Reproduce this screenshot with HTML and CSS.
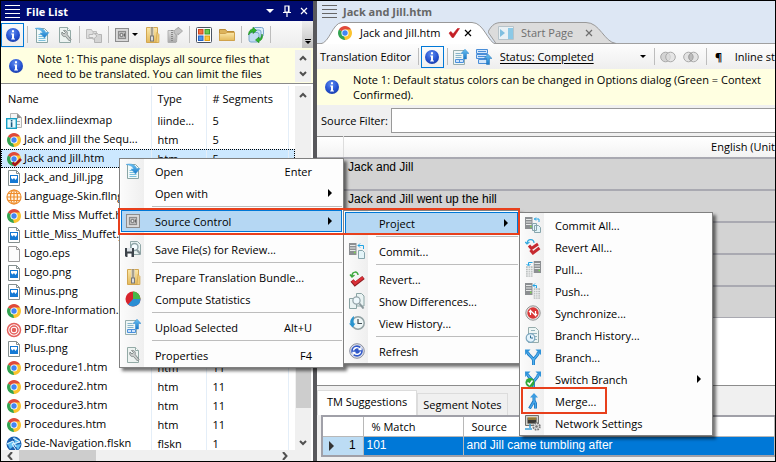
FILE: index.html
```html
<!DOCTYPE html>
<html lang="en">
<head>
<meta charset="utf-8">
<title>Translation Editor</title>
<link rel="stylesheet" href="styles.css">
</head>
<body>
<svg class="sprite" aria-hidden="true">
  <defs>
    <radialGradient id="gBlue" cx=".45" cy=".3" r=".8"><stop offset="0" stop-color="#5f8cf0"/><stop offset=".6" stop-color="#2450cf"/><stop offset="1" stop-color="#1b3aa0"/></radialGradient>
    <linearGradient id="gFold" x1="0" y1="0" x2="0" y2="1"><stop offset="0" stop-color="#fbe7a8"/><stop offset="1" stop-color="#e3b95c"/></linearGradient>
    <linearGradient id="gGray" x1="0" y1="0" x2="0" y2="1"><stop offset="0" stop-color="#e0e0e0"/><stop offset="1" stop-color="#a8a8a8"/></linearGradient>
    <linearGradient id="gArrow" x1="0" y1="0" x2="0" y2="1"><stop offset="0" stop-color="#6cc2f2"/><stop offset="1" stop-color="#1878c8"/></linearGradient>
  </defs>
  <symbol id="info" viewBox="0 0 16 16"><circle cx="8" cy="8" r="7" fill="url(#gBlue)"/><path d="M7 3.200h2v2H7zM6.200 6.400H9v5h1V12.600H6.200V11.400H7V7.600H6.200z" fill="#fff"/></symbol>
  <symbol id="open" viewBox="0 0 16 16"><path d="M2.500 1.500h8l3 3v11h-11z" fill="#f2fafa" stroke="#8aa6a6"/><path d="M4.500 7.500h4M4.500 9.500h5M4.500 11.500h7M4.500 13.500h7" stroke="#7cc0dc"/><path d="M1 1.500C6 0 11 2 11.500 5.500H15L10.500 11 6 6h2.500C8 3.500 5 2 1 1.500z" fill="url(#gArrow)" stroke="#4aa0dc" stroke-width=".5"/></symbol>
  <symbol id="wrench" viewBox="0 0 16 16"><path d="M2.500.5h8l3 3v12h-11z" fill="#edf3f1" stroke="#93aaa6"/><path d="M10.500.5v3h3" fill="#fff" stroke="#93aaa6"/><path d="M5 5l2 2 1.500-1.500-2-2C9 3 11 4.500 10.200 7.500L14 12.500l-1.500 1.500L8.500 9.500C6 10 4 8 5 5z" fill="#c9cccb" stroke="#747c7c" stroke-width=".8"/></symbol>
  <symbol id="movefiles" viewBox="0 0 16 16"><path d="M.5 2.500h5l1 2h4v7H.5z" fill="#dedede" stroke="#bdbdbd"/><path d="M8.500 6.500h3l1 1h3v8h-7z" fill="#d4d4d4" stroke="#b4b4b4"/><path d="M3 7.500h4V5.500l4 3.500-4 3.500v-2H3z" fill="#ececec" stroke="#b8b8b8"/></symbol>
  <symbol id="safe" viewBox="0 0 16 16"><rect x="1.500" y="1.500" width="13" height="13" fill="#cfcfcf" stroke="#8d8d8d"/><rect x="3" y="3" width="10" height="10" fill="#c0c0c0" stroke="#e4e4e4"/><rect x="4.500" y="4.500" width="7" height="7" fill="#bcbcbc" stroke="#8c8c8c"/><circle cx="7.500" cy="8" r="1.600" fill="#e4e4e4" stroke="#6a6a6a"/><path d="M10.500 6.500v3" stroke="#666"/></symbol>
  <symbol id="zip" viewBox="0 0 16 16"><path d="M2.500.5h11v15h-11z" fill="url(#gFold)" stroke="#d2a650"/><path d="M13 5.500l2 2v8h-3z" fill="#f0cd7a" stroke="#c89a45" stroke-width=".6"/><path d="M6 .5h4v9H6z" fill="#efe2c0"/><path d="M8 .5v9" stroke="#5e5e5e" stroke-width="2.500" stroke-dasharray="1 1"/><rect x="6.500" y="9" width="3" height="5" fill="#ddd" stroke="#777"/></symbol>
  <symbol id="zipgray" viewBox="0 0 16 16"><path d="M1 3.500h8v12H1z" fill="url(#gGray)" stroke="#b0b0b0"/><path d="M5 3v12" stroke="#888" stroke-width="2" stroke-dasharray="1 1"/><path d="M9.500 15C10 10 10 7 7 6c0-4 3-4.500 4-4.500V0l4.500 4L11 8V6" fill="#c4c4c4" stroke="#a8a8a8"/></symbol>
  <symbol id="tiles" viewBox="0 0 16 16"><rect x=".5" y=".5" width="15" height="15" rx="1" fill="#fff" stroke="#4a5262"/><rect x="2.500" y="2.500" width="4.500" height="4.500" fill="#f4703c" stroke="#cc4420"/><rect x="9" y="2.500" width="4.500" height="4.500" fill="#6fc94c" stroke="#3b9c2c"/><rect x="2.500" y="9" width="4.500" height="4.500" fill="#4a92ee" stroke="#2464c4"/><rect x="9" y="9" width="4.500" height="4.500" fill="#fcc83c" stroke="#e09c10"/></symbol>
  <symbol id="folder" viewBox="0 0 16 16"><path d="M.5 13.500V2.500h6l1.500 2h7v9z" fill="#dcb35c" stroke="#b98c3a"/><path d="M.5 13.500v-7h6l1.500-1h7.500v8z" fill="url(#gFold)" stroke="#cfa24c"/></symbol>
  <symbol id="syncall" viewBox="0 0 16 16"><rect x="5" y=".5" width="10.500" height="9" rx="2" fill="#dcedfa" stroke="#7ba8cc"/><rect x="3" y="3" width="10" height="9" rx="2" fill="#cbe2f5" stroke="#7ba8cc"/><rect x="1" y="5.500" width="10" height="9.500" rx="2" fill="#c2dcf2" stroke="#7ba8cc"/><path d="M.5 8C.5 4 3 2 5 2V.2L8.500 3.500 5 6.500V4.500C3.500 4.500 2.500 6 .5 8z" fill="#2fb52f" stroke="#168316" stroke-width=".6"/><path d="M14 7c1.500 4-1 7-3 7v1.800L7.500 13l3.500-3v2c1.500 0 2.500-2 3-5z" fill="#2fb52f" stroke="#168316" stroke-width=".6"/></symbol>
  <symbol id="chrome" viewBox="0 0 16 16"><path d="M8 8L1.940 4.500A7 7 0 0 1 14.060 4.500z" fill="#e04a3a"/><path d="M8 8L14.060 4.500A7 7 0 0 1 8 15z" fill="#fbc32e"/><path d="M8 8V15A7 7 0 0 1 1.940 4.500z" fill="#32a350"/><path d="M8 4.500h6.060L11 10z" fill="#fbc32e"/><path d="M5 6L1.940 4.500 8 4.500z" fill="#e04a3a"/><path d="M11 9.800L8 15 7 11z" fill="#fbc32e"/><circle cx="8" cy="8" r="3.600" fill="#fff"/><circle cx="8" cy="8" r="2.700" fill="#4285f4"/></symbol>
  <symbol id="chromecheck" viewBox="0 0 16 16"><use href="#chrome"/><path d="M6.500 11.500L9 14 15 8" fill="none" stroke="#a5141c" stroke-width="2.600"/></symbol>
  <symbol id="indexmap" viewBox="0 0 16 16"><path d="M4.500.5h7l4 4v10h-11z" fill="#f5f5f5" stroke="#b5b5b5"/><path d="M11 .5v4.500h4.500z" fill="#8b8b8b"/><path d="M7 5.500h5M11 8.500h3M11 11.500h3" stroke="#aaa"/><rect x=".7" y="5.700" width="9.600" height="9.600" fill="#e8fbff" stroke="#159fc4" stroke-width="1.400"/><path d="M4.800 7h1.600v1.500H4.800zM4.800 9.300h1.600V14H4.800z" fill="#1a5a80"/></symbol>
  <symbol id="image" viewBox="0 0 16 16"><path d="M2.500.5h8l3 3v12h-11z" fill="#fff" stroke="#858f8f"/><path d="M10.500.5v3h3" fill="none" stroke="#858f8f"/><rect x="4" y="5" width="8" height="8" fill="#1479d4"/><path d="M5 6h6v2L9.500 10 8 8 6.500 9.500 5 8z" fill="#fff"/></symbol>
  <symbol id="blank" viewBox="0 0 16 16"><path d="M2.500.5h8l3 3v12h-11z" fill="#fcfcfc" stroke="#9a9a9a"/><path d="M10.500.5v3h3" fill="none" stroke="#9a9a9a"/></symbol>
  <symbol id="skin" viewBox="0 0 16 16"><g fill="#fff6e8" stroke="#ee8d2c" stroke-width="1.200"><circle cx="8" cy="8" r="7"/><ellipse cx="8" cy="8" rx="3.500" ry="7"/><path d="M8 1v14M1 8h14M2 4.500h12M2 11.500h12"/></g></symbol>
  <symbol id="target" viewBox="0 0 16 16"><g fill="#fff" stroke="#e4605c" stroke-width="1.500"><circle cx="8" cy="8" r="6.500"/><circle cx="8" cy="8" r="4"/><circle cx="8" cy="8" r="1.500" fill="#e4605c"/></g></symbol>
  <symbol id="nav" viewBox="0 0 16 16"><circle cx="8" cy="8" r="7.500" fill="#1b5fae"/><path d="M1 7L7 5l2 4-5 4zM8 1l6 4-5 4zM9 9l6-1-3 6z" fill="#63bff2"/><path d="M7 2L14 6 6 8l4 6M1 8l6-3 3 6" stroke="#e8f6ff" fill="none"/></symbol>
  <symbol id="savereview" viewBox="0 0 16 16"><path d="M5.500.5h7l3 3v10h-10z" fill="#e8f2f1" stroke="#91a8a8"/><circle cx="9.500" cy="6" r="3.500" fill="#f6fdff" stroke="#90a5a8" stroke-width="1.400"/><path d="M12 9l3.500 4" stroke="#8d9ca0" stroke-width="2"/><path d="M0 7h9v9H1L0 15z" fill="#3d434a"/><path d="M2 7h5v3.500H2z" fill="#dfe4e8"/><path d="M2.500 12.500h4V16h-4z" fill="#fff"/></symbol>
  <symbol id="pie" viewBox="0 0 16 16"><circle cx="8" cy="8" r="7.500" fill="#d8242c"/><path d="M8 8V.5A7.500 7.500 0 0 1 15.500 8z" fill="#46b848"/><path d="M8 8h7.500A7.500 7.500 0 0 1 3 13.600z" fill="#2b8ed4"/></symbol>
  <symbol id="upload" viewBox="0 0 16 16"><path d="M.5 1.500h11v14H.5z" fill="#eef6f6" stroke="#96aeae"/><path d="M2.500 4.500h5M2.500 6.500h6M2.500 8.500h6" stroke="#87b4c8"/><path d="M2.500 10.500h8v3h-8zM6.500 10.500v3" fill="#cfe4fb" stroke="#4a90dc"/><path d="M12 .2L16 4.500H13.500V10h-3V4.500H8z" fill="url(#gArrow)" stroke="#2d86cc" stroke-width=".5"/></symbol>
  <symbol id="uploadgrid" viewBox="0 0 16 16"><path d="M.5.5h11v4H.5zM.5 5.500h11v4H.5zM2.500 10.500h9v4h-9z" fill="#d3e7fb" stroke="#4a8ed8"/><path d="M2 2.500h8M2 7.500h8" stroke="#4a8ed8"/><path d="M12 5.200L16 9.500H13.500V15.500h-3V9.500H8z" fill="url(#gArrow)" stroke="#2272b8" stroke-width=".5"/></symbol>
  <symbol id="server" viewBox="0 0 8 12"><path d="M0 0h7.500v12H0z" fill="#8c8f92"/><path d="M1 2.500h5.500M1 5h5.500M1 7.500h5.500" stroke="#e6e8e8"/><path d="M5 9.500h1.500" stroke="#7bdb4a" stroke-width="1.500"/></symbol>
  <symbol id="serverpale" viewBox="0 0 8 12"><path d="M0 0h7.500v12H0z" fill="#b8bcbc"/><path d="M0 2.500h8M0 5h8M0 7.500h8M0 10h8M2.500 0v12M5 0v12" stroke="#eff1f1"/></symbol>
  <symbol id="commit" viewBox="0 0 16 16"><use href="#server" width="8" height="12"/><path d="M9 2.500h5.500V6M11 .5l-2 2 2 2" fill="none" stroke="#22a4e4"/><path d="M9.500 7.500h4l2 2v6h-6z" fill="#e3f4f8" stroke="#87a5ac"/></symbol>
  <symbol id="commitall" viewBox="0 0 16 16"><use href="#server" width="8" height="12"/><path d="M9 2h5V5M11 .5L9.500 2 11 3.500" fill="none" stroke="#22a4e4"/><path d="M7.500 6.500h4v7h-4zM9.500 8.500h4l2 2v5h-6z" fill="#e3f4f8" stroke="#87a5ac"/></symbol>
  <symbol id="revert" viewBox="0 0 16 16"><path d="M3 5c0-5 6-5 6-1M1 3.500L3 6l2.500-2" fill="none" stroke="#3da83d" stroke-width="1.500"/><path d="M3 9.500l3 3.500L14.500 6.500" fill="none" stroke="#8d1c20" stroke-width="4"/><path d="M3.500 9.500l2.500 3L14 6.500" fill="none" stroke="#dc3038" stroke-width="2.500"/></symbol>
  <symbol id="revertall" viewBox="0 0 16 16"><path d="M2 4c1-5 7-4 7 0M0 3l2 2 2.500-2" fill="none" stroke="#33a9df" stroke-width="1.200"/><path d="M4 6.500l2.500 3L13 5M5.500 11l2.500 3 6.500-5" fill="none" stroke="#c62a30" stroke-width="3"/></symbol>
  <symbol id="diff" viewBox="0 0 16 16"><path d="M7.500.5h5l2.500 2.500v10H7.500zM.5 5.500h5l2 2v8h-7z" fill="#eaf3f3" stroke="#8ba4a4"/><circle cx="7.500" cy="7.500" r="3.600" fill="#eef8fc" stroke="#95a5aa" stroke-width="1.300"/><path d="M10.500 10.500l4 5" stroke="#8b989c" stroke-width="2"/></symbol>
  <symbol id="history" viewBox="0 0 16 16"><circle cx="9" cy="8" r="6.200" fill="#eef6f6" stroke="#92a2a4" stroke-width="1.500"/><path d="M9 4v4.500h4" fill="none" stroke="#425058" stroke-width="1.200"/><path d="M5 1C1 4 1 7 1.500 8.500H0l3.500 4 3-4H5c-1-2.500 0-4.500 0-7.500z" fill="#2794cf"/></symbol>
  <symbol id="refresh" viewBox="0 0 16 16"><circle cx="8" cy="8" r="7.300" fill="#dfe3ec" stroke="#8b8fa0"/><circle cx="8" cy="8" r="5.800" fill="#3158c8"/><path d="M4.500 7.500C5 4 9 4 11 6M9.500 6.500h2.500V4M11.500 8.500C11 12 7 12 5 10M6.500 9.500H4V12" fill="none" stroke="#fff" stroke-width="1.400"/></symbol>
  <symbol id="pull" viewBox="0 0 16 16"><use href="#server" x="8.500" width="8" height="12"/><use href="#serverpale" x="1" y="5" width="7" height="11"/><path d="M7.500 1.500H3.500V4M1.500 3l2 2 2-2" fill="none" stroke="#22a4e4"/></symbol>
  <symbol id="push" viewBox="0 0 16 16"><use href="#server" width="8" height="12"/><use href="#serverpale" x="8.500" y="5" width="7" height="11"/><path d="M8 2.500h3.500V5M10 .5l-2 2 2 2" fill="none" stroke="#22a4e4"/></symbol>
  <symbol id="synchronize" viewBox="0 0 16 16"><circle cx="8" cy="8" r="7.200" fill="#e5e5e5" stroke="#939393"/><circle cx="8" cy="8" r="5.700" fill="#d93636"/><path d="M5.500 10V5.500l5 5V6M4 7l1.500-1.500L7 7M9 9l1.500 1.500L12 9" stroke="#fff" stroke-width="1.200" fill="none"/></symbol>
  <symbol id="branchhistory" viewBox="0 0 16 16"><path d="M3.500.5h7l3 3v12h-10z" fill="#edf5f4" stroke="#96acac"/><path d="M6 3.500h4M6 6.500h6M10 9.500h2M10 12.500h2" stroke="#93b5bd"/><circle cx="5.500" cy="11" r="4.300" fill="#e3f3fc" stroke="#7aa5bd" stroke-width="1.200"/><path d="M5.500 8.500V11H8" stroke="#2d6f94" fill="none"/></symbol>
  <symbol id="branch" viewBox="0 0 16 16"><path d="M8.500 16V11.500C8.500 8 13 8 13.500 3M8.500 11.500C8.500 8 3 7 2.500 3" fill="none" stroke="#1d78c2" stroke-width="3"/><path d="M8.500 16V11.500C8.500 8 13 8 13.500 3M8.500 11.500C8.500 8 3 7 2.500 3" fill="none" stroke="#51b0ee" stroke-width="1.500"/><path d="M0 .5h5.500L.2 6zM10.500.5H16V6z" fill="#2f93da"/></symbol>
  <symbol id="switch" viewBox="0 0 16 16"><use href="#branch"/><circle cx="5" cy="11.500" r="4.500" fill="#30a83a"/><path d="M2.500 11.500l2 2 3-4" fill="none" stroke="#fff" stroke-width="1.500"/></symbol>
  <symbol id="merge" viewBox="0 0 16 16"><path d="M9 3.500V8L4.500 15.500M9 7.500l1.500 3v5" fill="none" stroke="#1d74bc" stroke-width="3"/><path d="M9 3.500V8.500L5 15M9 7.500l1.500 3v4.500" fill="none" stroke="#45a6ea" stroke-width="1.500"/><path d="M9 0l4 4.500H5z" fill="#3b9be0"/></symbol>
  <symbol id="network" viewBox="0 0 16 16"><path d="M.5.5h13v10H.5z" fill="#d2d0c8" stroke="#70706c"/><path d="M2.500 2.500h9v6h-9z" fill="#3b3a36"/><path d="M4 2v3M6 2v3M8 2v3M10 2v3" stroke="#e6b93c"/><path d="M5 9v4M0 14h7" stroke="#3ba0d8" stroke-width="1.500"/><circle cx="11.500" cy="11.500" r="3.300" fill="#e4e4e4" stroke="#777" stroke-width="1.800" stroke-dasharray="1.600 1"/><circle cx="11.500" cy="11.500" r="1.300" fill="#777"/></symbol>
  <symbol id="startpage" viewBox="0 0 16 16"><path d="M.5 1.500h15v13H.5z" fill="#e9f1f5" stroke="#b7c3c9"/><path d="M10 3h5v11h-5z" fill="#8cc9e6"/><path d="M2 4l5 4-5 4z" fill="#7fbfe0"/></symbol>
  <symbol id="venn" viewBox="0 0 16 16"><circle cx="5.500" cy="8" r="4.800" fill="#d3d3d3" stroke="#a9a9a9"/><circle cx="10.500" cy="8" r="4.800" fill="#dedede" fill-opacity=".7" stroke="#a9a9a9"/></symbol>
  <symbol id="vennmid" viewBox="0 0 16 16"><circle cx="5.500" cy="8" r="4.800" fill="#e3e3e3" stroke="#a9a9a9"/><circle cx="10.500" cy="8" r="4.800" fill="#e3e3e3" stroke="#a9a9a9"/><path d="M8 4a4.800 4.800 0 0 1 0 8 4.800 4.800 0 0 1 0-8z" fill="#bbb" stroke="#a0a0a0"/></symbol>
  <symbol id="check" viewBox="0 0 12 12"><path d="M1 6l2-1.500L5 7 9.500 1.500 11.500 1.500 5.500 10.500H4z" fill="#c41e24" stroke="#c41e24" stroke-width=".6"/></symbol>
  <symbol id="close" viewBox="0 0 8 8"><path d="M1 1l6 6M7 1L1 7" stroke="currentColor" stroke-width="1.200"/></symbol>
  <symbol id="down" viewBox="0 0 8 4"><path d="M0 0h8L4 4z" fill="currentColor"/></symbol>
  <symbol id="right" viewBox="0 0 4 8"><path d="M0 0v8l4-4z" fill="currentColor"/></symbol>
  <symbol id="pin" viewBox="0 0 8 12"><path d="M2 1h4v6H2zM0 7.500h8M4 8v4M5.500 1v6" fill="none" stroke="currentColor" stroke-width="1.200"/></symbol>
  <symbol id="chevup" viewBox="0 0 8 6"><path d="M1 5l3-3 3 3" fill="none" stroke="currentColor" stroke-width="2"/></symbol>
  <symbol id="chevdown" viewBox="0 0 8 6"><path d="M1 1l3 3 3-3" fill="none" stroke="currentColor" stroke-width="2"/></symbol>
  <symbol id="chevleft" viewBox="0 0 6 8"><path d="M5 0L1.500 4 5 8" fill="none" stroke="currentColor" stroke-width="2"/></symbol>
  <symbol id="chevright" viewBox="0 0 6 8"><path d="M1 0l3.500 4L1 8" fill="none" stroke="currentColor" stroke-width="2"/></symbol>
</svg>

<div class="app">
  <section class="files">
    <header class="titlebar">
      <span class="grip"></span><h2>File List</h2>
      <button aria-label="Pane options"><svg class="wide"><use href="#down"/></svg></button>
      <button aria-label="Pin"><svg class="pin"><use href="#pin"/></svg></button>
      <button aria-label="Close"><svg class="x"><use href="#close"/></svg></button>
    </header>
    <div class="toolbar">
      <button class="on" aria-label="Notes"><svg class="ic"><use href="#info"/></svg></button>
      <i class="vsep"></i>
      <button aria-label="Open file"><svg class="ic"><use href="#open"/></svg></button>
      <button aria-label="File properties"><svg class="ic"><use href="#wrench"/></svg></button>
      <i class="vsep"></i>
      <button aria-label="Move files"><svg class="ic"><use href="#movefiles"/></svg></button>
      <i class="vsep"></i>
      <button class="split" aria-label="Source control"><svg class="ic"><use href="#safe"/></svg><svg class="tri"><use href="#down"/></svg></button>
      <button aria-label="Prepare bundle"><svg class="ic"><use href="#zip"/></svg></button>
      <button aria-label="Export bundle"><svg class="ic"><use href="#zipgray"/></svg></button>
      <i class="vsep"></i>
      <button aria-label="Tiles"><svg class="ic"><use href="#tiles"/></svg></button>
      <button aria-label="Folder"><svg class="ic"><use href="#folder"/></svg></button>
      <i class="vsep"></i>
      <button aria-label="Synchronize files"><svg class="ic"><use href="#syncall"/></svg></button>
      <i class="vsep"></i>
      <button class="more" aria-label="More tools"><i class="bar"></i><svg class="tri"><use href="#down"/></svg></button>
    </div>
    <div class="note">
      <svg class="ic"><use href="#info"/></svg>
      <p>Note 1: This pane displays all source files that need to be translated. You can limit the files</p>
      <div class="spin"><svg><use href="#chevup"/></svg><svg><use href="#chevdown"/></svg></div>
    </div>
    <div class="list">
      <div class="listview">
        <table class="filetable">
          <colgroup><col class="c-name"><col class="c-type"><col class="c-seg"><col></colgroup>
          <thead><tr><th>Name</th><th>Type</th><th># Segments</th><td></td></tr></thead>
          <tbody>
            <tr><td><svg class="ic"><use href="#indexmap"/></svg>Index.liindexmap</td><td>liinde...</td><td>5</td><td></td></tr>
            <tr><td><svg class="ic"><use href="#chrome"/></svg>Jack and Jill the Sequ...</td><td>htm</td><td>5</td><td></td></tr>
            <tr class="sel"><td><svg class="ic"><use href="#chromecheck"/></svg>Jack and Jill.htm</td><td>htm</td><td>5</td><td></td></tr>
            <tr><td><svg class="ic"><use href="#image"/></svg>Jack_and_Jill.jpg</td><td></td><td></td><td></td></tr>
            <tr><td><svg class="ic"><use href="#skin"/></svg>Language-Skin.fllng</td><td></td><td></td><td></td></tr>
            <tr><td><svg class="ic"><use href="#chrome"/></svg>Little Miss Muffet.htm</td><td></td><td></td><td></td></tr>
            <tr><td><svg class="ic"><use href="#image"/></svg>Little_Miss_Muffet.jpg</td><td></td><td></td><td></td></tr>
            <tr><td><svg class="ic"><use href="#blank"/></svg>Logo.eps</td><td></td><td></td><td></td></tr>
            <tr><td><svg class="ic"><use href="#image"/></svg>Logo.png</td><td></td><td></td><td></td></tr>
            <tr><td><svg class="ic"><use href="#image"/></svg>Minus.png</td><td></td><td></td><td></td></tr>
            <tr><td><svg class="ic"><use href="#chrome"/></svg>More-Information.htm</td><td></td><td></td><td></td></tr>
            <tr><td><svg class="ic"><use href="#target"/></svg>PDF.fltar</td><td></td><td></td><td></td></tr>
            <tr><td><svg class="ic"><use href="#image"/></svg>Plus.png</td><td></td><td></td><td></td></tr>
            <tr><td><svg class="ic"><use href="#chrome"/></svg>Procedure1.htm</td><td>htm</td><td>11</td><td></td></tr>
            <tr><td><svg class="ic"><use href="#chrome"/></svg>Procedure2.htm</td><td>htm</td><td>11</td><td></td></tr>
            <tr><td><svg class="ic"><use href="#chrome"/></svg>Procedure3.htm</td><td>htm</td><td>11</td><td></td></tr>
            <tr><td><svg class="ic"><use href="#chrome"/></svg>Procedures.htm</td><td>htm</td><td>11</td><td></td></tr>
            <tr><td><svg class="ic"><use href="#nav"/></svg>Side-Navigation.flskn</td><td>flskn</td><td>1</td><td></td></tr>
          </tbody>
        </table>
      </div>
      <div class="vbar"><svg><use href="#chevup"/></svg><span class="vthumb"></span><svg><use href="#chevdown"/></svg></div>
      <div class="hbar"><svg><use href="#chevleft"/></svg><span class="hthumb"></span><svg><use href="#chevright"/></svg></div>
    </div>
  </section>

  <main class="editor">
    <header class="doctitle"><span class="grip"></span><h1>Jack and Jill.htm</h1></header>
    <nav class="tabs">
      <div class="tab active">
        <svg class="shape" viewBox="0 0 176 22" preserveAspectRatio="none"><path d="M0 22C10 21 12 1 22 .5H152C164 .5 168 21 176 22"/></svg>
        <svg class="ic"><use href="#chrome"/></svg><a href="#doc">Jack and Jill.htm</a><svg class="tick"><use href="#check"/></svg><button aria-label="Close Jack and Jill.htm"><svg class="x"><use href="#close"/></svg></button>
      </div>
      <div class="tab idle">
        <svg class="shape" viewBox="0 0 128 22" preserveAspectRatio="none"><path d="M8 21.500L0 10C4 2 8 .5 14 .5H98C112 .5 116 20 128 21.500z"/></svg>
        <svg class="ic"><use href="#startpage"/></svg><a href="#start">Start Page</a><button aria-label="Close Start Page"><svg class="x"><use href="#close"/></svg></button>
      </div>
    </nav>
    <div class="edbar">
      <span class="label">Translation Editor</span>
      <i class="vsep"></i>
      <button class="on" aria-label="Notes"><svg class="ic"><use href="#info"/></svg></button>
      <i class="vsep"></i>
      <button aria-label="Upload"><svg class="ic"><use href="#upload"/></svg></button>
      <button aria-label="Upload segments"><svg class="ic"><use href="#uploadgrid"/></svg></button>
      <select class="status" aria-label="Status"><option>Status: Completed</option></select>
      <svg class="tri"><use href="#down"/></svg>
      <i class="vsep after"></i>
      <button aria-label="Union"><svg class="ic"><use href="#venn"/></svg></button>
      <button aria-label="Intersection"><svg class="ic"><use href="#vennmid"/></svg></button>
      <i class="vsep"></i>
      <button class="pilcrow" aria-label="Show marks">¶</button>
      <span class="inline">Inline st</span>
    </div>
    <div class="note ednote">
      <svg class="ic"><use href="#info"/></svg>
      <p>Note 1: Default status colors can be changed in Options dialog (Green = Context<br>Confirmed).</p>
    </div>
    <div class="filter"><label for="src">Source Filter:</label><input id="src" type="text"></div>
    <table class="segments">
      <thead><tr><td class="rowhead"></td><th>English (Unit</th></tr></thead>
      <tbody>
        <tr><td></td><td>Jack and Jill</td></tr>
        <tr><td></td><td>Jack and Jill went up the hill</td></tr>
        <tr><td></td><td></td></tr>
        <tr><td></td><td></td></tr>
        <tr><td></td><td></td></tr>
      </tbody>
    </table>
    <div class="bottom">
      <nav class="subtabs"><button class="cur">TM Suggestions</button><button>Segment Notes</button></nav>
      <table class="tm">
        <thead><tr><td class="num"></td><th class="match">% Match</th><th>Source</th></tr></thead>
        <tbody><tr><th class="num"><svg><use href="#right"/></svg><span>1</span></th><td>101</td><td>and Jill came tumbling after</td></tr></tbody>
      </table>
    </div>
  </main>
</div>

<div class="menu main-menu">
  <button><svg class="ic"><use href="#open"/></svg><span>Open</span><kbd>Enter</kbd></button>
  <button><i class="ic"></i><span>Open with</span><svg class="arr"><use href="#right"/></svg></button>
  <hr>
  <button class="hot"><svg class="ic"><use href="#safe"/></svg><span>Source Control</span><svg class="arr"><use href="#right"/></svg></button>
  <hr>
  <button><svg class="ic"><use href="#savereview"/></svg><span>Save File(s) for Review...</span></button>
  <hr>
  <button><svg class="ic"><use href="#zip"/></svg><span>Prepare Translation Bundle...</span></button>
  <button><svg class="ic"><use href="#pie"/></svg><span>Compute Statistics</span></button>
  <hr>
  <button><svg class="ic"><use href="#upload"/></svg><span>Upload Selected</span><kbd>Alt+U</kbd></button>
  <hr>
  <button><svg class="ic"><use href="#wrench"/></svg><span>Properties</span><kbd>F4</kbd></button>
</div>

<div class="menu sub-menu">
  <button class="hot"><i class="ic"></i><span>Project</span><svg class="arr"><use href="#right"/></svg></button>
  <hr>
  <button><svg class="ic"><use href="#commit"/></svg><span>Commit...</span></button>
  <hr>
  <button><svg class="ic"><use href="#revert"/></svg><span>Revert...</span></button>
  <button><svg class="ic"><use href="#diff"/></svg><span>Show Differences...</span></button>
  <button><svg class="ic"><use href="#history"/></svg><span>View History...</span></button>
  <hr>
  <button><svg class="ic"><use href="#refresh"/></svg><span>Refresh</span></button>
</div>

<div class="menu project-menu">
  <button><svg class="ic"><use href="#commitall"/></svg><span>Commit All...</span></button>
  <button><svg class="ic"><use href="#revertall"/></svg><span>Revert All...</span></button>
  <button><svg class="ic"><use href="#pull"/></svg><span>Pull...</span></button>
  <button><svg class="ic"><use href="#push"/></svg><span>Push...</span></button>
  <button><svg class="ic"><use href="#synchronize"/></svg><span>Synchronize...</span></button>
  <button><svg class="ic"><use href="#branchhistory"/></svg><span>Branch History...</span></button>
  <button><svg class="ic"><use href="#branch"/></svg><span>Branch...</span></button>
  <button><svg class="ic"><use href="#switch"/></svg><span>Switch Branch</span><svg class="arr"><use href="#right"/></svg></button>
  <button><svg class="ic"><use href="#merge"/></svg><span>Merge...</span></button>
  <button><svg class="ic"><use href="#network"/></svg><span>Network Settings</span></button>
</div>
<div class="callout path-callout"></div>
<div class="callout merge-callout"></div>
</body>
</html>
```
FILE: styles.css
```css
* { box-sizing: border-box; }
html, body { margin: 0; height: 100%; overflow: hidden; }
body { font: 11px/15px "Open Sans", "Noto Sans", sans-serif; color: #000; background: #f0f0f0; }
button, input, select { font: inherit; color: inherit; padding: 0; margin: 0; border: 0; background: none; }
button { display: flex; align-items: center; justify-content: center; flex: none; }
h1, h2, p { margin: 0; }
h1, h2 { font-size: 11px; line-height: 15px; font-weight: 700; }
a { color: inherit; text-decoration: none; }
svg { display: block; flex: none; }
.sprite { position: absolute; width: 0; height: 0; }
.ic { width: 16px; height: 16px; flex: none; }
.x { width: 8px; height: 8px; }
.tri { width: 6px; height: 3px; }
.wide { width: 8px; height: 4px; }
.pin { width: 8px; height: 12px; }

.app { display: grid; grid-template-columns: 312px minmax(0, 1fr); column-gap: 4px; height: 100vh; border: 1px solid #000; background: #58585c; }
.files, .editor { display: flex; flex-direction: column; min-width: 0; min-height: 0; background: #fff; }
.grip { width: 15px; height: 13px; background: repeating-linear-gradient(currentColor 0 1px, transparent 1px 4px); }

.titlebar { display: flex; align-items: center; gap: 6px; height: 20px; padding: 0 4px; background: #000b70; color: #fff; }
.titlebar h2 { flex: 1; }
.titlebar button { width: 11px; }

.toolbar { display: flex; align-items: center; height: 27px; background: linear-gradient(#fbfbfb, #ececec); }
.toolbar button { width: 23px; height: 24px; }
.toolbar .split { width: 29px; gap: 2px; }
.toolbar .more { width: 11px; height: auto; margin-left: auto; align-self: stretch; flex-direction: column; justify-content: flex-end; gap: 1px; padding-bottom: 4px; background: linear-gradient(#f0f0f0, #c0c0c0); }
.bar { width: 6px; height: 1px; background: #000; }
.on { border: 1px solid #0078d7; }
.vsep { width: 1px; height: 17px; background: #bdbdbd; flex: none; margin: 0 2px 0 3px; }

.note { display: flex; align-items: center; gap: 13px; background: #ffffe1; height: 36px; padding: 0 2px 0 7px; border-bottom: 1px solid #8a8a8a; }
.note p { flex: 1; }
.spin { display: flex; flex-direction: column; justify-content: space-around; align-items: center; width: 16px; height: 32px; background: #f0f0f0; color: #505050; }
.spin svg, .vbar svg { width: 8px; height: 6px; }

.list { flex: 1; min-height: 0; display: grid; grid-template: minmax(0, 1fr) 11px / minmax(0, 1fr) 16px; padding: 2px 2px 0 0; }
.listview { overflow: hidden; }
.filetable { width: 100%; table-layout: fixed; border-collapse: collapse; }
.c-name { width: 150px; }
.c-type { width: 55px; }
.c-seg { width: 82px; }
.filetable th, .filetable td { height: 19px; padding: 0 0 0 6px; text-align: left; font-weight: 400; white-space: nowrap; overflow: hidden; border-left: 1px solid #e4eef8; }
.filetable th { height: 25px; }
.filetable tr > :first-child { border-left: 0; }
.filetable th:first-child { padding-left: 7px; }
.filetable td .ic { display: inline-block; vertical-align: middle; margin-right: 2px; }
.filetable tbody td:first-child { padding-left: 5px; }
.sel { background: #cce8ff; outline: 1px dotted #000; outline-offset: -1px; }
.vbar, .hbar { display: flex; align-items: center; justify-content: space-between; background: #f0f0f0; color: #505050; }
.vbar { flex-direction: column; padding: 6px 0 4px; }
.vthumb { width: 15px; flex: 0 0 55%; margin: auto 0 32px; background: #cdcdcd; }
.hbar { grid-column: 1 / -1; padding: 0 23px 0 6px; }
.hbar svg { width: 6px; height: 8px; }
.hthumb { width: 77px; align-self: stretch; margin: 0 auto 0 6px; background: #cdcdcd; }

.doctitle { display: flex; align-items: center; gap: 6px; height: 21px; padding: 0 5px; color: #666; background: #dde7f4; }
.tabs { display: flex; height: 22px; padding-left: 3px; background: #dde7f4; border-bottom: 1px solid #a0a0a0; }
.tab { position: relative; display: flex; align-items: center; }
.tab > * { position: relative; }
.tab .shape { position: absolute; inset: 0; width: 100%; height: 22px; fill: #fff; stroke: #999; }
.tab .ic { margin-right: 7px; }
.tab.active { width: 176px; padding-left: 17px; z-index: 1; }
.tick { width: 12px; height: 12px; margin: 0 4px 0 8px; }
.tab.idle { width: 128px; margin-left: -8px; padding-left: 10px; color: #6e6e6e; }
.tab.idle .shape { fill: #dcdcdc; }
.tab.idle button { margin-left: 12px; }

.edbar { display: flex; align-items: center; height: 25px; padding-left: 3px; background: linear-gradient(#fdfdfd, #eee); white-space: nowrap; overflow: hidden; }
.edbar > button { width: 23px; height: 22px; }
.label { width: 95px; }
.status { appearance: none; flex: 0 0 140px; margin-left: 4px; text-decoration: underline; text-underline-offset: 2px; }
.edbar .after { margin-left: 8px; }
.edbar .pilcrow { width: 20px; font-weight: 700; }
.inline { margin-left: 6px; }

.ednote { border-bottom: 0; }
.ednote p { white-space: nowrap; }
.filter { display: flex; align-items: center; gap: 2px; height: 31px; padding: 0 0 0 4px; background: #f0f0f0; }
.filter label { flex: none; width: 68px; white-space: nowrap; }
.filter input { flex: 1; min-width: 0; height: 25px; background: #fff; border: 1px solid #999; border-right: 0; }

.segments { width: 100%; table-layout: fixed; border-collapse: collapse; border-top: 1px solid #8c8c8c; font-family: "Liberation Sans", sans-serif; font-size: 12px; }
.segments .rowhead { width: 26px; border-right: 1px solid #ddd; }
.segments thead { background: linear-gradient(#fff, #f2f2f2); }
.segments th { height: 21px; padding: 0; text-align: right; font: 11px/15px "Open Sans", sans-serif; white-space: nowrap; }
.segments tbody td { height: 32px; padding: 1px 5px; vertical-align: top; background: #d3d3d3; border-top: 2px solid #a9a9b1; }
.segments tbody tr:last-child { border-bottom: 1px solid #a9a9b1; }

.bottom { margin-top: auto; background: #f0f0f0; border-top: 1px solid #8c8c8c; padding: 4px 0; }
.subtabs { display: flex; align-items: flex-end; height: 25px; }
.subtabs button { height: 22px; padding: 0 5px; border: 1px solid #dcdcdc; border-bottom: 0; }
.subtabs .cur { height: 25px; padding: 0 9px 4px; background: #fff; }
.tm { width: calc(100% - 4px); margin: 0 0 0 4px; table-layout: fixed; border-collapse: collapse; border: 2px solid #a0a0a8; border-right: 0; background: #fff; font-family: "Liberation Sans", sans-serif; font-size: 12px; }
.tm th, .tm td { height: 20px; padding: 0 3px; text-align: left; font-weight: 400; border: 1px solid #b8b8b8; }
.tm thead th { padding-left: 8px; font-family: "Open Sans", sans-serif; font-size: 11px; }
.tm .num { width: 41px; }
.tm .match { width: 100px; }
.tm tbody td { background: #0078d7; color: #fff; }
.tm tbody .num { background: #bcdcf4; }
.tm tbody .num svg { display: inline-block; width: 5px; height: 10px; margin: 0 15px 0 3px; vertical-align: middle; color: #333; }

.menu { position: absolute; display: flex; flex-direction: column; padding: 1px; border: 1px solid #808080; background: linear-gradient(90deg, #fbfbfb, #efefef) no-repeat 1px 0 / 23px 100%, #fdfdfd; box-shadow: 3px 3px 3px rgba(0, 0, 0, .55); }
.menu button { height: 22px; margin: 0; padding: 0 9px 0 3px; border: 1px solid transparent; justify-content: flex-start; text-align: left; white-space: nowrap; }
.menu button span { margin-left: 14px; flex: 1; }
.menu kbd { font: inherit; margin-right: 20px; }
.menu .arr { width: 4px; height: 8px; }
.menu hr { width: calc(100% - 31px); height: 1px; margin: 2px 0 3px 31px; border: 0; background: #bdbdbd; }
.menu .hot { background: #b5d7f3; border-color: #0078d7; }
.main-menu { left: 119px; top: 158px; width: 225px; }
.sub-menu { left: 343px; top: 210px; width: 177px; }
.project-menu { left: 519px; top: 212px; width: 194px; }
.callout { position: absolute; border: 2px solid #e8401c; }
.path-callout { left: 118px; top: 208px; width: 402px; height: 27px; }
.merge-callout { left: 521px; top: 387px; width: 86px; height: 27px; }
```
